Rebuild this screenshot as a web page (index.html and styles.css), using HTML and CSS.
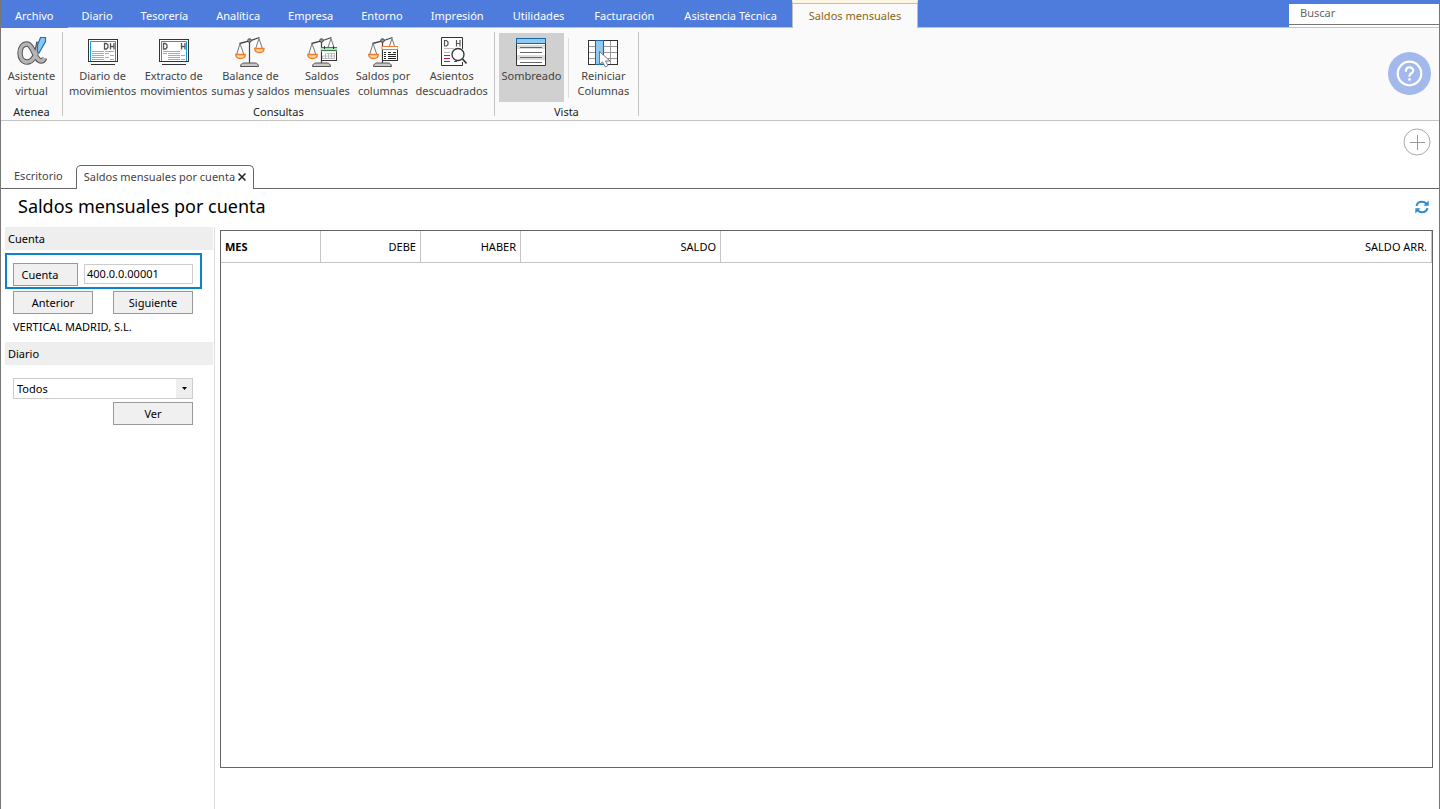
FILE: index.html
```html
<!DOCTYPE html>
<html lang="es">
<head>
<meta charset="utf-8">
<title>Saldos mensuales por cuenta</title>
<link rel="stylesheet" href="styles.css">
</head>
<body>
<svg class="defs" aria-hidden="true">
  <defs>
    <symbol id="scale" viewBox="0 0 30 32">
      <path d="M14.500 6v22" stroke="#444" stroke-width="1.200" fill="none"/>
      <path d="M4.500 7.500L14.500 5l10-3.500" stroke="#444" stroke-width="1.300" fill="none"/>
      <path d="M5 7.500L1.500 19M5 7.500L9 19M24 2.500L20.500 13M24 2.500L27.500 13" stroke="#777" fill="none"/>
      <circle cx="14.500" cy="4.500" r="1.800" fill="#999" stroke="#444"/>
      <path d="M.7 18.500h9.600c0 2.500-2 4-4.800 4s-4.800-1.500-4.800-4zM19.700 12.500h9.300c0 2.500-2 4-4.600 4s-4.700-1.500-4.700-4z" fill="#fbd78f" stroke="#ee7d31" stroke-width="1.300"/>
      <path d="M5.500 30.500c0-2 1.300-3.500 3.500-3.500h11c2.200 0 3.500 1.500 3.500 3.500z" fill="#c8c8c8" stroke="#555"/>
    </symbol>
  </defs>
</svg>
<div class="window">
  <header>
    <nav class="menu" aria-label="Menú principal">
      <button class="menu-item menu-app">Archivo</button>
      <button class="menu-item">Diario</button>
      <button class="menu-item">Tesorería</button>
      <button class="menu-item">Analítica</button>
      <button class="menu-item">Empresa</button>
      <button class="menu-item">Entorno</button>
      <button class="menu-item">Impresión</button>
      <button class="menu-item menu-wide">Utilidades</button>
      <button class="menu-item menu-wide">Facturación</button>
      <button class="menu-item menu-wide">Asistencia Técnica</button>
      <button class="menu-item menu-active">Saldos mensuales</button>
      <div class="search"><input type="text" placeholder="Buscar" aria-label="Buscar"></div>
    </nav>
    <div class="ribbon">
      <section class="group group-first">
        <div class="tools">
          <button class="tool">
            <svg class="icon" viewBox="0 0 30 32"><path d="M22 6c-2 11-6 20-12 20-4 0-7-3.500-7-9s3-9 7-9c6 0 8 17 14 17 2 0 3-1.500 3.500-3" fill="none" stroke="#555" stroke-width="5.500"/><path d="M22 7c-2 11-6 19-12 19-4 0-7-3.500-7-9s3-9 7-9c6 0 8 17 14 17 2 0 3-1.500 3.500-3" fill="none" stroke="#b5b5b5" stroke-width="3.500"/><path d="M23.500 1.500h5v4L22 17l-1.500-1V9z" fill="#8cc6ee" stroke="#1c6fb5" stroke-width="1.200"/></svg>
            <span>Asistente<br>virtual</span>
          </button>
        </div>
        <h2 class="group-name">Atenea</h2>
      </section>
      <section class="group">
        <div class="tools">
          <button class="tool">
            <svg class="icon" viewBox="0 0 30 32"><rect x=".5" y="3.500" width="29" height="22" fill="#fff" stroke="#333"/><path d="M2.500 25V5.500h25V25" fill="none" stroke="#1a9cd8"/><path d="M16.500 7.500h2L20 9v2.500L18.500 13h-2zM22.500 7v6.500M26 7v6.500M22.500 10.500H26" fill="none" stroke="#555" stroke-width="1.300"/><path d="M4 15.500h12M17 17.500h4M22 19.500h4M4 17.500h12M4 19.500h12M4 21.500h12M17 21.500h4M22 23.500h4M4 23.500h12M17 15.500h9" stroke="#aaa"/><path d="M3 28.500h24" stroke="#333"/></svg>
            <span>Diario de<br>movimientos</span>
          </button>
          <button class="tool">
            <svg class="icon" viewBox="0 0 30 32"><rect x=".5" y="3.500" width="29" height="22" fill="#fff" stroke="#333"/><path d="M2.500 25V5.500h25V25" fill="none" stroke="#1a9cd8"/><path d="M4.500 7.500h2L8 9v2.500L6.500 13h-2zM22.500 7v6.500M26 7v6.500M22.500 10.500H26" fill="none" stroke="#555" stroke-width="1.300"/><path d="M4 15.500h17M4 17.500h4M9 17.500h12M9 19.500h12M22 19.500h4M9 21.500h12M22 23.500h4M9 23.500h12" stroke="#aaa"/><path d="M3 28.500h24" stroke="#333"/></svg>
            <span>Extracto de<br>movimientos</span>
          </button>
          <button class="tool">
            <svg class="icon" viewBox="0 0 30 32"><use href="#scale"/></svg>
            <span>Balance de<br>sumas y saldos</span>
          </button>
          <button class="tool">
            <svg class="icon" viewBox="0 0 30 32"><use href="#scale"/><rect x="14.500" y="12.500" width="15" height="12" fill="#fff" stroke="#333"/><path d="M14 11.500h16v4H14z" fill="#a9dfb4"/><path d="M14 11.500h16M14 14.500h16" stroke="#3f7f51"/><path d="M17.500 10v3M26.500 10v3" stroke="#333"/><path d="M19.500 17.500h8v5h-12v-2.500h12M18.500 22.500v-5M21.500 22.500v-5M24.500 22.500v-5M27.500 17.500v2" fill="none" stroke="#bbb"/></svg>
            <span>Saldos<br>mensuales</span>
          </button>
          <button class="tool">
            <svg class="icon" viewBox="0 0 30 32"><use href="#scale"/><rect x="14.500" y="10.500" width="15" height="14" fill="#fff" stroke="#333"/><path d="M14 10.500h16v3H14z" fill="#fff" stroke="#ee7d31"/><path d="M16 16.500h2M20 16.500h3M25 16.500h3M16 18.500h2M20 18.500h8M16 20.500h2M20 20.500h8M16 22.500h2M20 22.500h8" stroke="#222"/></svg>
            <span>Saldos por<br>columnas</span>
          </button>
          <button class="tool">
            <svg class="icon" viewBox="0 0 30 32"><path d="M25.500 13V1.500h-21v28h21V26" fill="#fff" stroke="#333"/><path d="M7.500 4.500h2L11 6v2.500L9.500 10h-2zM19.500 4v6.500M23 4v6.500M19.500 7.500H23" fill="none" stroke="#555" stroke-width="1.200"/><path d="M7 12.500h10M7 16.500h6" stroke="#bbb"/><path d="M7 19.500h6M7 22.500h6M7 25.500h6M17 25.500h3" stroke="#d8122d"/><circle cx="21" cy="18.500" r="6" fill="#fff" stroke="#333" stroke-width="1.300"/><path d="M25.500 23l4 4.500" stroke="#333" stroke-width="1.600"/></svg>
            <span>Asientos<br>descuadrados</span>
          </button>
        </div>
        <h2 class="group-name">Consultas</h2>
      </section>
      <section class="group">
        <div class="tools">
          <button class="tool pressed" aria-pressed="true">
            <svg class="icon" viewBox="0 0 30 32"><path fill="#fff" d="M.5 7h29v22H.5z"/><path d="M1 9h28v4H1zM1 19h28v5H1z" fill="#ddd"/><path d="M.5 7v22.500h29V7" fill="none" stroke="#333"/><rect x=".5" y="2.500" width="29" height="5" fill="#90c8f0" stroke="#1667aa"/><path d="M4 11.500h22M4 16.500h22M4 21.500h22M4 26.500h22" stroke="#666"/></svg>
            <span>Sombreado</span>
          </button>
          <div class="tool-split"></div>
          <button class="tool">
            <svg class="icon" viewBox="0 0 30 32"><rect x=".5" y="4.500" width="29" height="24" fill="#fff" stroke="#333"/><path d="M1 10.500h28M1 16.500h28M1 22.500h28M22.500 5v23" stroke="#999"/><rect x="7.500" y="4.500" width="8" height="24" fill="#90c8f0" stroke="#1667aa"/><path d="M11.500 15.500v13l3-2.500 3 5 2.500-1.500-2.500-4.500h4.500z" fill="#fff" stroke="#777"/></svg>
            <span>Reiniciar<br>Columnas</span>
          </button>
        </div>
        <h2 class="group-name">Vista</h2>
      </section>
      <button class="help" aria-label="Ayuda"><svg viewBox="0 0 42 42"><circle cx="21" cy="21" r="21" fill="#a3b9ec"/><circle cx="21" cy="21" r="11.500" fill="none" stroke="#fff" stroke-width="2.200"/><path d="M17.500 18.500c0-2.300 1.500-3.500 3.500-3.500s3.700 1.300 3.700 3.200c0 2.600-3.700 2.500-3.700 5" fill="none" stroke="#fff" stroke-width="2.200" stroke-linecap="round"/><circle cx="21" cy="26.800" r="1.300" fill="#fff"/></svg></button>
    </div>
  </header>
  <div class="quick">
    <button class="add" aria-label="Añadir"><svg viewBox="0 0 28 28"><circle cx="14" cy="14" r="13" fill="none" stroke="#aaa"/><path d="M14.500 7v15M7 14.500h15" stroke="#999"/></svg></button>
  </div>
  <div class="tabs">
    <button class="tab">Escritorio</button>
    <div class="tab tab-open"><span>Saldos mensuales por cuenta</span><button class="close" aria-label="Cerrar"><svg viewBox="0 0 8 8"><path d="M.5.500l7 7M7.500.500l-7 7" stroke="#222" stroke-width="1.500"/></svg></button></div>
  </div>
  <div class="title-row">
    <h1>Saldos mensuales por cuenta</h1>
    <button class="refresh" aria-label="Actualizar"><svg viewBox="0 0 14 14"><path d="M1.500 6C2 3.300 4 1.700 7 1.700c2 0 3.300.7 4.500 2M12.500 8c-.5 2.700-2.500 4.300-5.500 4.300-2 0-3.300-.7-4.500-2" fill="none" stroke="#2d8fd0" stroke-width="2"/><path d="M13.700.5v5.200H8.500zM.3 13.500V8.300h5.200z" fill="#2d8fd0"/></svg></button>
  </div>
  <main class="content">
    <aside class="side">
      <h2 class="side-head">Cuenta</h2>
      <div class="account">
        <button class="btn account-btn">Cuenta</button>
        <input type="text" class="account-input" value="400.0.0.00001" aria-label="Número de cuenta">
      </div>
      <div class="side-row">
        <button class="btn">Anterior</button>
        <button class="btn">Siguiente</button>
      </div>
      <p class="company">VERTICAL MADRID, S.L.</p>
      <h2 class="side-head">Diario</h2>
      <div class="select-wrap">
        <select aria-label="Diario"><option>Todos</option></select>
        <span class="arrow"><svg viewBox="0 0 5 3"><path d="M0 0h5L2.500 3z"/></svg></span>
      </div>
      <div class="side-row side-end"><button class="btn">Ver</button></div>
    </aside>
    <div class="grid">
      <table>
        <colgroup><col class="c-first"><col class="c-small"><col class="c-small"><col class="c-large"><col></colgroup>
        <thead><tr><th class="month">MES</th><th>DEBE</th><th>HABER</th><th>SALDO</th><th>SALDO ARR.</th></tr></thead>
        <tbody></tbody>
      </table>
    </div>
  </main>
</div>
</body>
</html>
```
FILE: styles.css
```css
* { box-sizing: border-box; }
body { margin: 0; background: #fff; color: #000; font: 11px/15px "Noto Sans", "Open Sans", sans-serif; }
h1, h2, p { margin: 0; font-weight: 400; }
button, input, select { font: inherit; color: inherit; margin: 0; border-radius: 0; }
button { padding: 0; border: 0; background: none; }
svg { display: block; }
.defs { position: absolute; width: 0; height: 0; }
.window { min-height: 100vh; display: flex; flex-direction: column; border: solid #777; border-width: 0 1px; }

.menu { display: flex; align-items: stretch; height: 28px; background: #4d7cdc; border-bottom: 1px solid #c4c4c4; }
.menu-item { padding: 4px 14px 0; color: #fff; white-space: nowrap; }
.menu-app { margin-bottom: -1px; padding-top: 3px; background: #4d7cdc; }
.menu-wide { padding: 4px 15px 0; }
.menu-active { margin-bottom: -1px; padding: 0 16px 1px; border: 1px solid #bdbdbd; border-top: 3px solid #fdf6e2; border-bottom: 0; background: #fafafa; color: #8a6414; box-shadow: inset 0 1px #bdbdbd; }
.search { margin: 4px 0 0 auto; width: 150px; height: 23px; background: #fff; }
.search input { display: block; width: 100%; height: 21px; padding: 0 11px 3px; border: 0; border-bottom: 1px solid #777; outline: 0; background: #fff; }
.search input::placeholder { color: #666; opacity: 1; }

.ribbon { display: flex; align-items: flex-start; height: 93px; padding-top: 4px; background: #fafafa; border-bottom: 1px solid #c4c4c4; }
.group { padding: 0 4px; border-right: 1px solid #c4c4c4; height: 84px; }
.group-first { padding: 0; }
.tools { display: flex; height: 70px; padding-top: 1px; }
.tool { display: flex; flex-direction: column; align-items: center; min-width: 61px; padding: 3px 2px 0; color: #444; white-space: nowrap; }
.icon { width: 30px; height: 32px; }
.pressed { min-width: 65px; background: #d0d0d0; }
.tool-split { width: 1px; margin: 5px 4px 4px; background: #ddd; }
.group-name { padding-top: 2px; font-size: 11px; text-align: center; color: #222; }
.help { margin: 20px 8px 0 auto; }
.help svg { width: 43px; height: 43px; }

.quick { display: flex; justify-content: flex-end; padding: 7px 8px 9px; }
.add svg { width: 28px; height: 28px; }

.tabs { display: flex; align-items: flex-end; height: 24px; border-bottom: 1px solid #666; }
.tab { padding: 0 13px 2px; height: 24px; color: #444; white-space: nowrap; }
.tab-open { display: flex; align-items: center; gap: 3px; margin: 0 0 -1px; padding: 0 7px 3px; border: 1px solid #666; border-bottom: 0; border-radius: 5px 5px 0 0; background: #fff; }
.close svg { width: 8px; height: 8px; margin-top: 2px; }
.title-row { display: flex; align-items: center; justify-content: space-between; height: 38px; padding: 0 10px 3px 17px; }
h1 { padding-bottom: 2px; font-size: 18px; line-height: 24px; }
.refresh svg { width: 14px; height: 14px; }

.content { flex: 1; display: flex; }
.side { width: 214px; padding: 0 1px 0 4px; border-right: 1px solid #ddd; }
.side-head { height: 23px; padding: 4px 3px; background: #eee; font-size: 11px; }
.account { display: flex; align-items: center; gap: 6px; width: 197px; height: 36px; margin: 3px 0 2px; padding: 6px 0 0 6px; border: 2px solid #0a84c8; }
.btn { width: 80px; height: 23px; border: 1px solid #999; background: #f0f0f0; }
.account-btn { width: 65px; padding-right: 11px; }
.account-input { width: 109px; height: 20px; padding: 0 2px 1px; border: 1px solid #ccc; background: #fff; outline: 0; }
.side-row { display: flex; justify-content: space-between; width: 180px; margin-left: 8px; }
.side-end { justify-content: flex-end; }
.company { margin: 5px 8px 8px; }
.select-wrap { position: relative; width: 180px; margin: 13px 8px 3px; }
select { display: block; width: 100%; height: 21px; padding: 0 3px; border: 1px solid #ccc; background: #fff; appearance: none; }
.arrow { position: absolute; right: 1px; top: 1px; bottom: 1px; width: 16px; display: flex; align-items: center; justify-content: center; background: #eee; pointer-events: none; }
.arrow svg { width: 5px; height: 3px; }

.grid { flex: 1; margin: 3px 6px 41px 5px; border: 1px solid #666; }
table { width: 100%; border-collapse: separate; border-spacing: 0; table-layout: fixed; }
.c-first, .c-small { width: 100px; }
.c-large { width: 200px; }
th { height: 32px; padding: 0 4px; border: solid #c4c4c4; border-width: 0 1px 1px 0; font-weight: 400; text-align: right; }
.month { font-weight: 700; text-align: left; }
```
